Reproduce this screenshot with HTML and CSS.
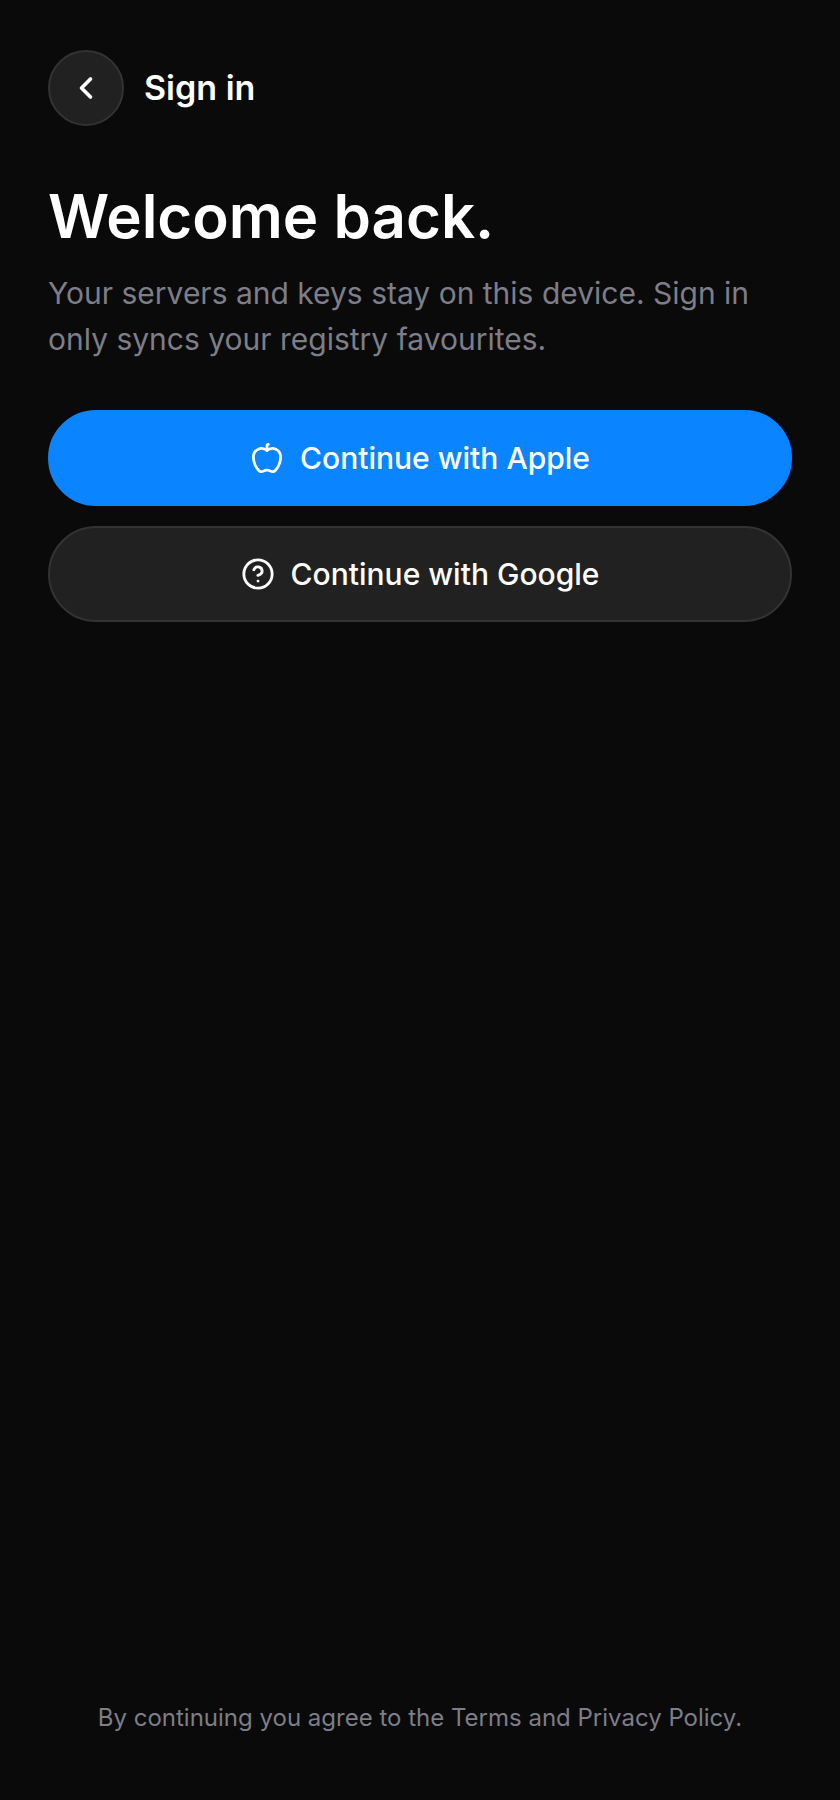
FILE: index.html
```html
<!DOCTYPE html>
<html lang="en">
<head>
    <meta charset="UTF-8">
    <meta name="viewport" content="width=device-width, initial-scale=1.0">
    <title>Sign in</title>
    <link rel="stylesheet" href="styles.css">
</head>
<body>
    <div class="screen">
        <header class="topbar">
            <button class="back-btn" type="button" aria-label="Back">
                <svg class="back-icon" viewBox="0 0 24 24"><path d="m15 18-6-6 6-6"/></svg>
            </button>
            <h2 class="topbar-title">Sign in</h2>
        </header>

        <main class="content">
            <h1>Welcome back.</h1>
            <p class="intro">Your servers and keys stay on this device. Sign in only syncs your registry favourites.</p>

            <div class="actions">
                <button class="btn btn-primary" type="button">
                    <svg class="icon" viewBox="-0.5 -0.5 25 25"><path d="M12 6.528V3a1 1 0 0 1 1-1h0"/><path d="M18.237 21A15 15 0 0 0 22 11a6 6 0 0 0-10-4.472A6 6 0 0 0 2 11a15.1 15.1 0 0 0 3.763 10 3 3 0 0 0 3.648.648 5.5 5.5 0 0 1 5.178 0A3 3 0 0 0 18.237 21"/></svg>
                    Continue with Apple
                </button>
                <button class="btn btn-secondary" type="button">
                    <svg class="icon" viewBox="0 0 24 24"><circle cx="12" cy="12" r="10"/><path d="M9.09 9a3 3 0 0 1 5.83 1c0 2-3 3-3 3"/><path d="M12 17h.01"/></svg>
                    Continue with Google
                </button>
            </div>
        </main>

        <footer class="legal">By continuing you agree to the Terms and Privacy Policy.</footer>
    </div>
</body>
</html>
```

FILE: styles.css
```css
* {
    box-sizing: border-box;
}
body {
    margin: 0;
    background: #0a0a0a;
    color: #fff;
    font-family: Inter, sans-serif;
}
.screen {
    display: flex;
    flex-direction: column;
    min-height: 100vh;
    padding: 50px 48px 64px;
}
.topbar {
    display: flex;
    align-items: center;
    gap: 20px;
}
.back-btn {
    display: flex;
    align-items: center;
    justify-content: center;
    width: 76px;
    height: 76px;
    padding: 0;
    background: #212121;
    border: 2px solid #333;
    border-radius: 50%;
    color: #fff;
    cursor: pointer;
}
.back-icon,
.icon {
    fill: none;
    stroke: currentColor;
    stroke-width: 2;
    stroke-linecap: round;
    stroke-linejoin: round;
}
.back-icon {
    width: 36px;
    height: 36px;
    stroke-width: 2.4;
}
.topbar-title {
    margin: 0;
    font-size: 34px;
    font-weight: 600;
    line-height: 42px;
}
.content {
    flex: 1;
    padding-top: 56px;
}
h1 {
    margin: 0;
    font-size: 60px;
    font-weight: 600;
    line-height: 68px;
}
.intro {
    margin: 20px 0 0;
    color: #7d7e87;
    font-size: 30px;
    line-height: 46px;
}
.actions {
    display: flex;
    flex-direction: column;
    gap: 20px;
    margin-top: 48px;
}
.btn {
    display: flex;
    align-items: center;
    justify-content: center;
    gap: 16px;
    width: 100%;
    height: 96px;
    border: 2px solid transparent;
    border-radius: 48px;
    color: #fff;
    font-family: inherit;
    font-size: 30px;
    font-weight: 500;
    cursor: pointer;
}
.btn-primary {
    background: #0a84ff;
    border-color: #0a84ff;
}
.btn-secondary {
    background: #212121;
    border-color: #333;
}
.icon {
    width: 34px;
    height: 34px;
}
.legal {
    color: #7d7e87;
    font-size: 24px;
    line-height: 36px;
    text-align: center;
}
```
